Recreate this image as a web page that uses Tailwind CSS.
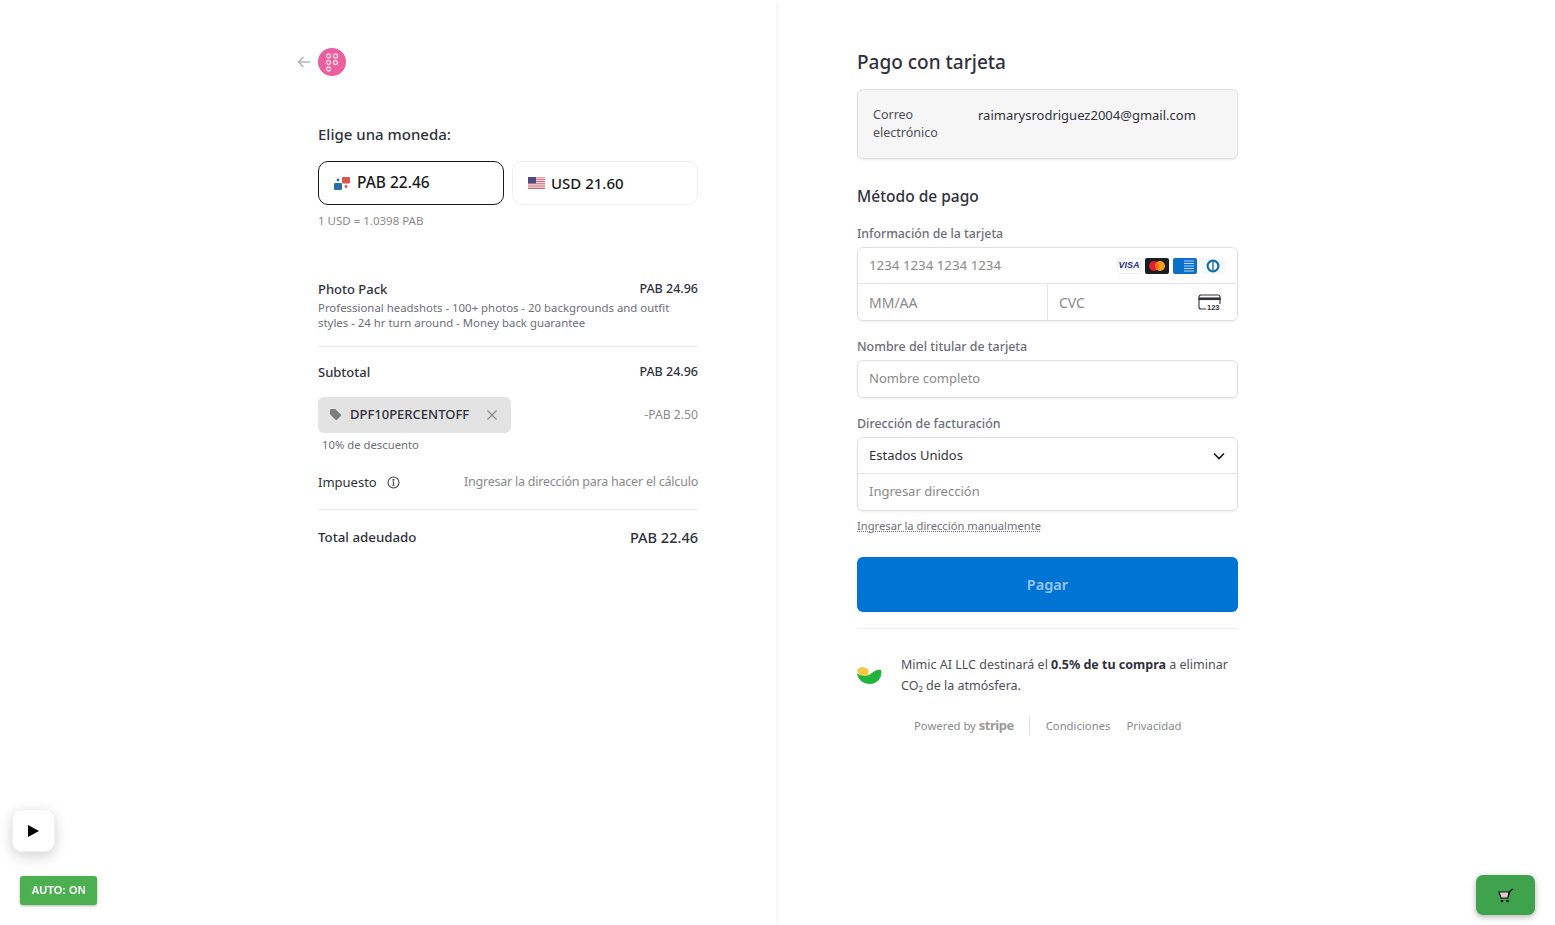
<!DOCTYPE html>
<html lang="es">
<head>
  <meta charset="UTF-8" />
  <title>Pago con tarjeta</title>
  <script src="https://cdn.jsdelivr.net/npm/@tailwindcss/browser@4"></script>
</head>
<body class="bg-white h-[925px] overflow-hidden font-['Noto_Sans','Open_Sans',sans-serif] text-[#1a1a1a]">
  <div class="flex h-[925px]">
    <!-- resumen -->
    <div class="w-[776px] pl-[318px] pt-[48px] shadow-[1px_0_6px_rgba(0,0,0,0.05)] shrink-0">
      <div class="w-[380px]">
        <div class="relative h-[28px]">
          <svg class="absolute left-[-21px] top-[8px] w-[13px] h-[12px]" viewBox="0 0 13 12" fill="none" stroke="#b5b5b5" stroke-width="1.6"><path d="M13 6H1.500M6.500 1 1.500 6l5 5"/></svg>
          <div class="w-[28px] h-[28px] rounded-full bg-[#ec5f9e] flex items-center justify-center">
            <svg class="w-[14px] h-[19px]" viewBox="0 0 14 19" fill="none" stroke="#fbd5e5" stroke-width="1.300"><circle cx="3.500" cy="3" r="2"/><circle cx="10.500" cy="3" r="2"/><circle cx="3.500" cy="9.500" r="2"/><circle cx="10.500" cy="9.500" r="2"/><circle cx="3.500" cy="16" r="2"/></svg>
          </div>
        </div>

        <h2 class="mt-[47px] text-[15px] leading-[22px] font-medium text-[#30313d]">Elige una moneda:</h2>

        <div class="mt-[16px] flex gap-[8px]">
          <div class="w-[186px] h-[44px] rounded-[10px] border border-[#1a1a1a] flex items-center pl-[15px] gap-[6px]">
            <svg class="w-[17px] h-[15px]" viewBox="0 0 17 15"><rect x="8" y="1" width="8" height="6.500" rx="1" fill="#d9534f"/><rect x="0" y="7" width="8" height="7" rx="1" fill="#2a6ea6"/><circle cx="4" cy="4" r="1.400" fill="#2a6ea6"/><circle cx="12" cy="10.500" r="1.400" fill="#d9534f"/></svg>
            <span class="text-[15.500px] font-medium">PAB 22.46</span>
          </div>
          <div class="w-[186px] h-[44px] rounded-[10px] border border-[#eeeeee] flex items-center pl-[15px] gap-[6px]">
            <svg class="w-[17px] h-[12px]" viewBox="0 0 17 12"><rect width="17" height="12" fill="#fff"/><path d="M0 .9h17M0 2.700h17M0 4.500h17M0 6.300h17M0 8.100h17M0 9.900h17M0 11.500h17" stroke="#c9606a" stroke-width=".95"/><rect width="8" height="6.300" fill="#4a4a85"/></svg>
            <span class="text-[15px] font-medium">USD 21.60</span>
          </div>
        </div>
        <p class="mt-[7px] text-[11.500px] leading-[18px] text-[#8a8a8a]">1 USD = 1.0398 PAB</p>

        <div class="mt-[49px] flex justify-between text-[13px] leading-[20px] font-medium text-[#30313d]">
          <span>Photo Pack</span><span class="text-[12.500px]">PAB 24.96</span>
        </div>
        <p class="text-[11.400px] leading-[15px] text-[#6d6e78] w-[360px] mt-[1px]">Professional headshots - 100+ photos - 20 backgrounds and outfit styles - 24 hr turn around - Money back guarantee</p>

        <div class="mt-[16px] border-t border-[#eaeaea] pt-[15px] flex justify-between text-[13px] leading-[20px] font-medium text-[#30313d]">
          <span>Subtotal</span><span class="text-[12.500px]">PAB 24.96</span>
        </div>

        <div class="mt-[15px] flex justify-between items-center">
          <div class="w-[193px] h-[36px] rounded-[6px] bg-[#e3e3e3] flex items-center pl-[12px]">
            <svg class="w-[13px] h-[12px]" viewBox="0 0 13 12" fill="#7d7d7d"><path d="M0 1.200C0 .5.5 0 1.200 0h3.600c.4 0 .7.1 1 .4l5 5c.5.5.5 1.200 0 1.700l-3.700 3.700c-.5.5-1.200.5-1.700 0l-5-5C.1 5.500 0 5.200 0 4.800Z"/></svg>
            <span class="ml-[7px] text-[13px] font-medium text-[#30313d]">DPF10PERCENTOFF</span>
            <svg class="ml-[18px] w-[10px] h-[10px]" viewBox="0 0 10 10" stroke="#8c8c8c" stroke-width="1.200"><path d="M.5.500l9 9M9.500.500l-9 9"/></svg>
          </div>
          <span class="text-[12.200px] text-[#8a8a8a]">-PAB 2.50</span>
        </div>
        <p class="mt-[3px] ml-[4px] text-[11.300px] leading-[18px] text-[#6d6e78]">10% de descuento</p>

        <div class="mt-[18px] flex justify-between items-center text-[13px] leading-[20px]">
          <span class="flex items-center text-[#30313d]">Impuesto
            <svg class="ml-[10px] w-[13px] h-[13px]" viewBox="0 0 13 13" fill="none" stroke="#444" stroke-width="1.100"><circle cx="6.500" cy="6.500" r="5.500"/><path d="M6.500 5.800v3.500M5.500 9.300h2M5.500 5.800h1"/><circle cx="6.500" cy="3.700" r=".5" fill="#444"/></svg>
          </span>
          <span class="text-[12.500px] tracking-[-0.22px] text-[#8a8a8a]">Ingresar la dirección para hacer el cálculo</span>
        </div>

        <div class="mt-[17px] border-t border-[#eaeaea] pt-[17px] flex justify-between items-center font-medium text-[#30313d]">
          <span class="text-[13.300px] leading-[20px]">Total adeudado</span>
          <span class="text-[14.500px] leading-[20px]">PAB 22.46</span>
        </div>
      </div>
    </div>

    <!-- pago -->
    <div class="pl-[81px] pt-[48px]">
      <div class="w-[381px]">
        <h1 class="text-[19px] leading-[28px] font-medium text-[#30313d]">Pago con tarjeta</h1>

        <div class="mt-[13px] h-[70px] rounded-[6px] border border-[#e0e0e0] bg-[#f6f6f6] shadow-[0_1px_2px_rgba(0,0,0,0.08)] flex pl-[15px] pt-[16px] leading-[18px] text-[#4f4f58]">
          <span class="w-[105px] text-[12.500px]">Correo electrónico</span>
          <span class="text-[13px] text-[#30313d]">raimarysrodriguez2004@gmail.com</span>
        </div>

        <h2 class="mt-[25px] text-[15.500px] leading-[24px] font-medium text-[#30313d]">Método de pago</h2>

        <label class="block mt-[17px] text-[12.300px] leading-[18px] font-medium text-[#6d6e78]">Información de la tarjeta</label>
        <div class="mt-[4px] rounded-[6px] border border-[#e0e0e0] shadow-[0_1px_2px_rgba(0,0,0,0.08)] text-[14px] text-[#8a8a8a]">
          <div class="h-[36px] flex items-center justify-between pl-[11px] pr-[12px] border-b border-[#e6e6e6]">
            <span class="text-[13.300px]">1234 1234 1234 1234</span>
            <div class="flex items-center gap-[4px]">
              <div class="w-[24px] h-[16px] rounded-[2px] bg-white border border-[#eeeeee] flex items-center justify-center font-['Liberation_Sans',sans-serif] text-[9px] leading-none font-bold italic text-[#1a2f7f]">VISA</div>
              <svg class="w-[24px] h-[16px]" viewBox="0 0 24 16"><rect width="24" height="16" rx="2" fill="#1c1c24"/><circle cx="9" cy="8" r="5" fill="#e3202c"/><circle cx="15" cy="8" r="5" fill="#f79e1b"/><path d="M12 4a5 5 0 0 1 0 8 5 5 0 0 1 0-8Z" fill="#f26a1b"/></svg>
              <svg class="w-[24px] h-[16px]" viewBox="0 0 24 16"><rect width="24" height="16" rx="2" fill="#0a6fc9"/><path d="M11 3h10M11 5.500h10M11 8h10M11 10.500h10M11 13h10" stroke="#b5d6f0" stroke-width="1"/></svg>
              <svg class="w-[24px] h-[16px]" viewBox="0 0 24 16"><rect width="24" height="16" rx="2" fill="#f3f8fb"/><circle cx="12" cy="8" r="6.500" fill="#0f6fa8"/><circle cx="12" cy="8" r="4.300" fill="#fff"/><rect x="11.300" y="3.500" width="1.400" height="9" fill="#0f6fa8"/></svg>
            </div>
          </div>
          <div class="h-[36px] flex">
            <div class="w-[190px] flex items-center pl-[11px] border-r border-[#e6e6e6]">MM/AA</div>
            <div class="flex-1 flex items-center justify-between pl-[11px] pr-[15px]">
              <span>CVC</span>
              <svg class="w-[24px] h-[16px]" viewBox="0 0 24 16" fill="none" stroke="#30313d" stroke-width="1.100"><path d="M8 15H3a2 2 0 0 1-2-2V3a2 2 0 0 1 2-2h17a2 2 0 0 1 2 2v7"/><rect x="1" y="4" width="21" height="1.500" fill="#30313d"/><text x="9" y="15.500" font-size="7.500" font-weight="700" fill="#30313d" stroke="none" font-family="Liberation Sans">123</text></svg>
            </div>
          </div>
        </div>

        <label class="block mt-[17px] text-[12.400px] leading-[18px] font-medium text-[#6d6e78]">Nombre del titular de tarjeta</label>
        <div class="mt-[4px] h-[38px] rounded-[6px] border border-[#e0e0e0] shadow-[0_1px_2px_rgba(0,0,0,0.08)] flex items-center pl-[11px] text-[13px] text-[#8a8a8a]">Nombre completo</div>

        <label class="block mt-[17px] text-[12.400px] leading-[18px] font-medium text-[#6d6e78]">Dirección de facturación</label>
        <div class="mt-[4px] rounded-[6px] border border-[#e0e0e0] shadow-[0_1px_2px_rgba(0,0,0,0.08)] text-[13px]">
          <div class="h-[36px] flex items-center justify-between pl-[11px] pr-[12px] border-b border-[#e6e6e6] text-[#30313d]">
            <span>Estados Unidos</span>
            <svg class="w-[12px] h-[8px]" viewBox="0 0 12 8" fill="none" stroke="#1a1a1a" stroke-width="1.700"><path d="m1 1.500 5 5 5-5"/></svg>
          </div>
          <div class="h-[36px] flex items-center pl-[11px] text-[#8a8a8a]">Ingresar dirección</div>
        </div>
        <p class="mt-[7px] text-[11.200px] leading-[16px] text-[#6d6e78] underline decoration-dotted">Ingresar la dirección manualmente</p>

        <button class="mt-[23px] w-[381px] h-[55px] rounded-[6px] bg-[#0074d4] text-[14.500px] font-semibold text-white/60">Pagar</button>

        <div class="mt-[16px] border-t border-[#ececec] pt-[25px] flex items-center">
          <svg class="w-[25px] h-[19px] shrink-0" viewBox="0 0 25 19"><path d="M0 4c3-4 9-4 12 1l-2 6C5 11 1 9 0 4Z" fill="#f6c944"/><path d="M0 7c3 3 8 4 12 2 4-2 6-6 12-5 2 6-3 14-11 14C6 18 1 14 0 7Z" fill="#22b43a"/></svg>
          <p class="ml-[19px] text-[12.500px] leading-[21px] text-[#4f4f58]">Mimic AI LLC destinará el <b class="font-bold text-[#30313d]">0.5% de tu compra</b> a eliminar CO₂ de la atmósfera.</p>
        </div>

        <div class="mt-[20px] pl-[57px] flex items-center text-[11.300px] leading-[18px] text-[#8a8a8a]">
          <span>Powered by <b class="font-bold text-[13px] tracking-[-0.5px] text-[#9a9a9a]">stripe</b></span>
          <span class="ml-[15px] h-[18px] border-l border-[#dcdcdc]"></span>
          <span class="ml-[16px]">Condiciones</span>
          <span class="ml-[16px]">Privacidad</span>
        </div>
      </div>
    </div>
  </div>

  <!-- flotantes -->
  <button class="fixed left-[12px] top-[809px] w-[43px] h-[43px] rounded-[10px] bg-white border border-[#f0f0f0] shadow-[0_4px_14px_rgba(0,0,0,0.18)] flex items-center justify-center">
    <svg class="w-[11px] h-[12px]" viewBox="0 0 11 12"><path d="M0 0l11 6-11 6Z" fill="#000"/></svg>
  </button>
  <div class="fixed left-[20px] top-[876px] w-[77px] h-[29px] rounded-[3px] bg-[#4caf50] shadow-[0_1px_3px_rgba(0,0,0,0.3)] flex items-center justify-center text-[11px] font-bold text-white font-['Liberation_Sans',sans-serif]">AUTO: ON</div>
  <div class="fixed left-[1476px] top-[875px] w-[59px] h-[40px] rounded-[7px] bg-[#3fa34d] shadow-[0_2px_6px_rgba(0,0,0,0.3)] flex items-center justify-center">
    <svg class="w-[16px] h-[15px]" viewBox="0 0 16 15" fill="none"><path d="M1 4h10l-1 6H3Z" fill="#e8c9d0" stroke="#111" stroke-width="1.200"/><path d="M10 9l2-6 3-2" stroke="#111" stroke-width="1.200"/><circle cx="4" cy="13" r="1.300" fill="#111"/><circle cx="9.500" cy="13" r="1.300" fill="#111"/></svg>
  </div>
</body>
</html>
